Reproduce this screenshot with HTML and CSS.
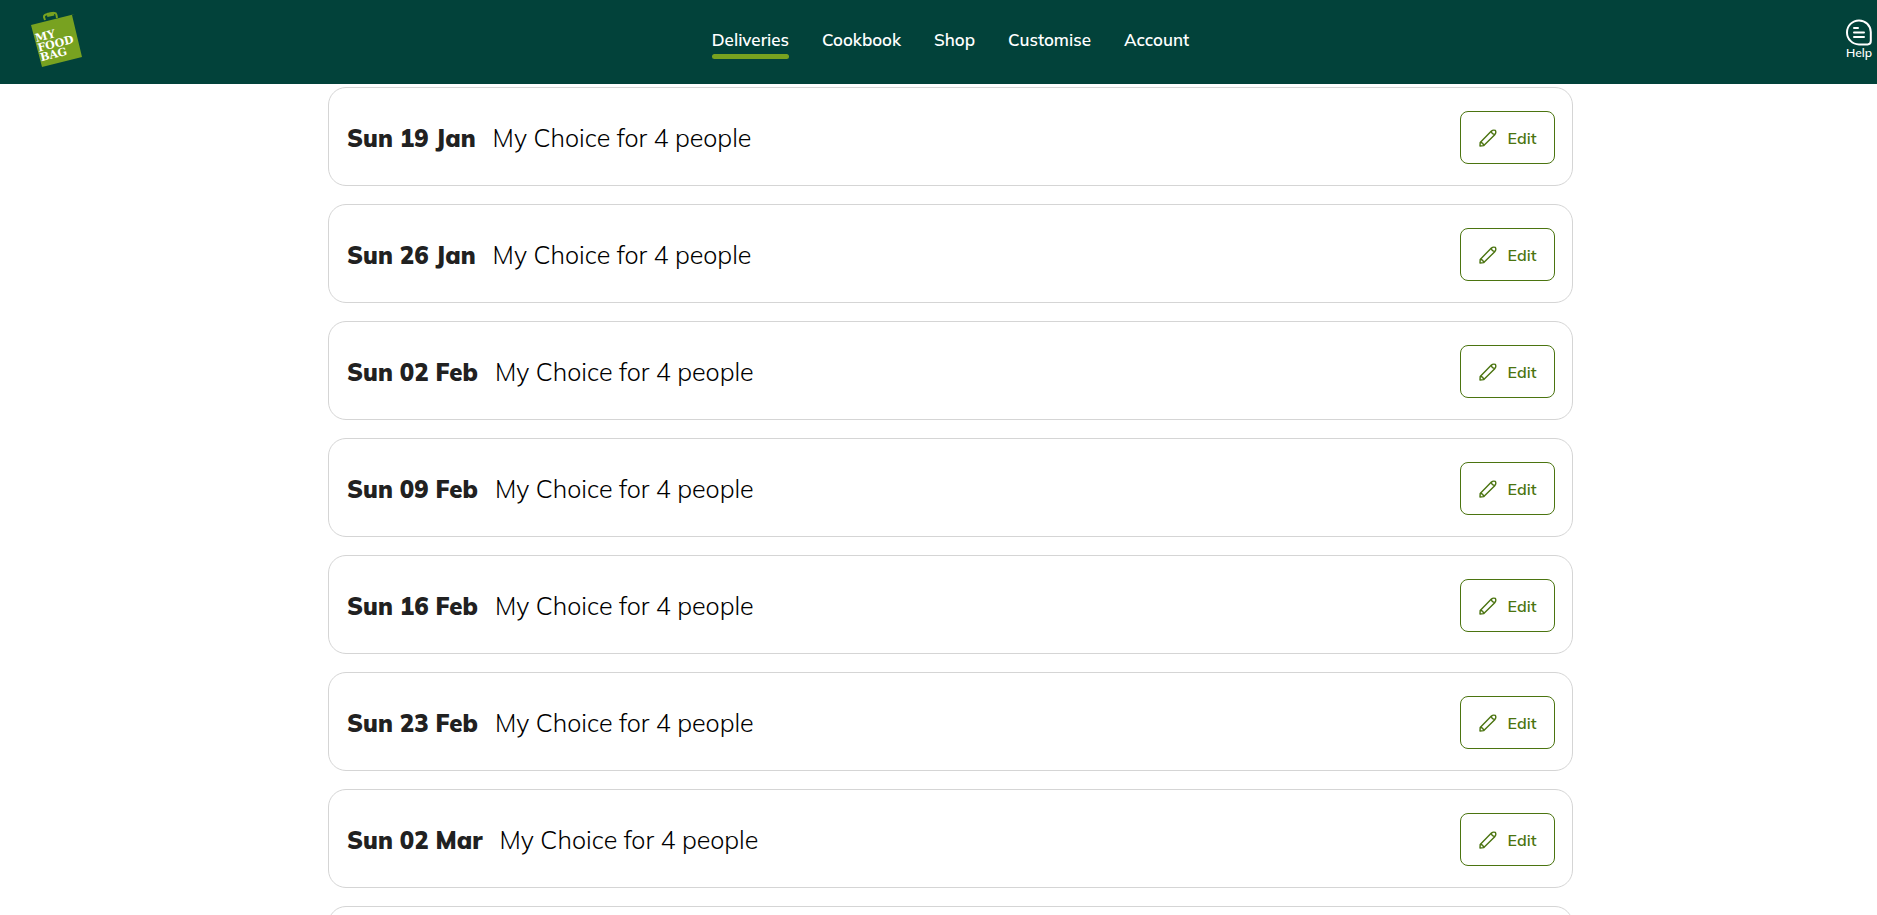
FILE: index.html
```html
<!DOCTYPE html>
<html lang="en">
<head>
    <meta charset="utf-8">
    <meta name="viewport" content="width=device-width, initial-scale=1">
    <title>Deliveries</title>
    <link rel="stylesheet" href="styles.css">
</head>
<body>
    <svg width="0" height="0" class="sprite" aria-hidden="true">
        <symbol id="pencil" viewBox="0 0 18 18">
            <g fill="none" stroke="currentColor" stroke-width="1.4" stroke-linejoin="round">
                <path d="M1 17 L1.2 13.4 L12.4 2 Q14 0.6 16.4 1.4 Q17.4 3.8 16 5.4 L4.8 16.6 Z"/>
                <path d="M1.2 13.4 Q4.2 13.6 4.8 16.6 M12.4 2 Q12.6 5.2 16 5.4"/>
            </g>
        </symbol>
    </svg>

    <header class="header">
        <a href="#" class="logo" aria-label="My Food Bag">
            <svg width="56" height="56" viewBox="0 0 56 56">
                <path d="M17 9 L16 6 Q16 4 18 3.6 L26 2 Q28 1.8 28.4 3.6 L29 7" fill="none" stroke="#78a220" stroke-width="2"/>
                <path d="M19 4 L26 2.6" stroke="#78a220" stroke-width="4"/>
                <path d="M3 14 L43 4 L47 3 L44 4 L54 46 L14 56 Z" fill="#78a220"/>
                <g class="logo-text" transform="rotate(-14 12 29)">
                    <text x="8" y="30">MY</text>
                    <text x="8" y="40">FOOD</text>
                    <text x="8" y="50">BAG</text>
                </g>
            </svg>
        </a>
        <nav class="nav">
            <a href="#" class="active">Deliveries</a>
            <a href="#">Cookbook</a>
            <a href="#">Shop</a>
            <a href="#">Customise</a>
            <a href="#">Account</a>
        </nav>
        <a href="#" class="help">
            <svg width="28" height="28" viewBox="0 0 28 28" fill="none" stroke="#fff" stroke-width="2">
                <path d="M14 2.4 A11.8 11.8 0 0 1 25.8 14 V23 Q25.8 26.4 22.6 26.4 H14 A12 12 0 0 1 14 2.4 Z"/>
                <path d="M9 10 H13 M9 14.5 H19 M9 19 H19" stroke-linecap="round"/>
            </svg>
            <span>Help</span>
        </a>
    </header>

    <main class="main">
        <div class="deliveries">
            <div class="delivery">
                <h2>Sun 19 Jan</h2>
                <p>My Choice for 4 people</p>
                <button type="button" class="edit"><svg width="18" height="18"><use href="#pencil"/></svg>Edit</button>
            </div>
            <div class="delivery">
                <h2>Sun 26 Jan</h2>
                <p>My Choice for 4 people</p>
                <button type="button" class="edit"><svg width="18" height="18"><use href="#pencil"/></svg>Edit</button>
            </div>
            <div class="delivery">
                <h2>Sun 02 Feb</h2>
                <p>My Choice for 4 people</p>
                <button type="button" class="edit"><svg width="18" height="18"><use href="#pencil"/></svg>Edit</button>
            </div>
            <div class="delivery">
                <h2>Sun 09 Feb</h2>
                <p>My Choice for 4 people</p>
                <button type="button" class="edit"><svg width="18" height="18"><use href="#pencil"/></svg>Edit</button>
            </div>
            <div class="delivery">
                <h2>Sun 16 Feb</h2>
                <p>My Choice for 4 people</p>
                <button type="button" class="edit"><svg width="18" height="18"><use href="#pencil"/></svg>Edit</button>
            </div>
            <div class="delivery">
                <h2>Sun 23 Feb</h2>
                <p>My Choice for 4 people</p>
                <button type="button" class="edit"><svg width="18" height="18"><use href="#pencil"/></svg>Edit</button>
            </div>
            <div class="delivery">
                <h2>Sun 02 Mar</h2>
                <p>My Choice for 4 people</p>
                <button type="button" class="edit"><svg width="18" height="18"><use href="#pencil"/></svg>Edit</button>
            </div>
            <div class="delivery"></div>
        </div>
    </main>
</body>
</html>
```
FILE: styles.css
```css
* {
    box-sizing: border-box;
}

body {
    margin: 0;
    height: 100vh;
    display: flex;
    flex-direction: column;
    background-color: #fff;
    font-family: "Mulish", "Muli", "Nunito", "Open Sans", sans-serif;
    color: #000;
}

.sprite {
    position: absolute;
}

.header {
    flex: none;
    display: grid;
    grid-template-columns: 1fr auto 1fr;
    padding: 0 4px 0 28px;
    height: 84px;
    background-color: #02423a;
}

.header a {
    color: #fff;
    text-decoration: none;
}

.logo {
    justify-self: start;
    padding-top: 11px;
}

.logo-text {
    fill: #fff;
    font-family: "DejaVu Serif", serif;
    font-size: 11px;
    font-weight: bold;
}

.nav {
    display: flex;
    align-items: flex-start;
    gap: 33px;
    padding-top: 28px;
    font-size: 17px;
    font-weight: 600;
    line-height: 24px;
}

.nav .active {
    position: relative;
}

.nav .active::after {
    content: "";
    position: absolute;
    left: 0;
    right: 0;
    top: 26px;
    height: 5px;
    border-radius: 3px;
    background-color: #78a220;
}

.help {
    justify-self: end;
    display: flex;
    flex-direction: column;
    align-items: center;
    padding-top: 18px;
    font-size: 12px;
    font-weight: 600;
    line-height: 14px;
}

.main {
    flex: 1;
    min-height: 0;
    overflow-y: auto;
    scrollbar-width: none;
    padding: 3px 0 3px 24px;
}

.deliveries {
    display: flex;
    flex-direction: column;
    gap: 18px;
    max-width: 1245px;
    margin: 0 auto;
}

.delivery {
    display: flex;
    align-items: center;
    min-height: 99px;
    padding: 23px 17px 21px 18px;
    border: 1px solid #d5d5d5;
    border-radius: 18px;
}

.delivery h2,
.delivery p {
    margin: 0;
    line-height: 32px;
}

.delivery h2 {
    margin-right: 17px;
    font-size: 24px;
    font-weight: 900;
    color: #212121;
}

.delivery p {
    font-size: 25px;
    font-weight: 300;
}

.edit {
    display: flex;
    align-items: center;
    justify-content: center;
    gap: 11px;
    width: 95px;
    height: 53px;
    margin-left: auto;
    padding: 0;
    border: 1px solid #4b7410;
    border-radius: 8px;
    background-color: #fff;
    color: #4b7410;
    font-family: inherit;
    font-size: 16px;
    font-weight: 600;
    cursor: pointer;
}
```
